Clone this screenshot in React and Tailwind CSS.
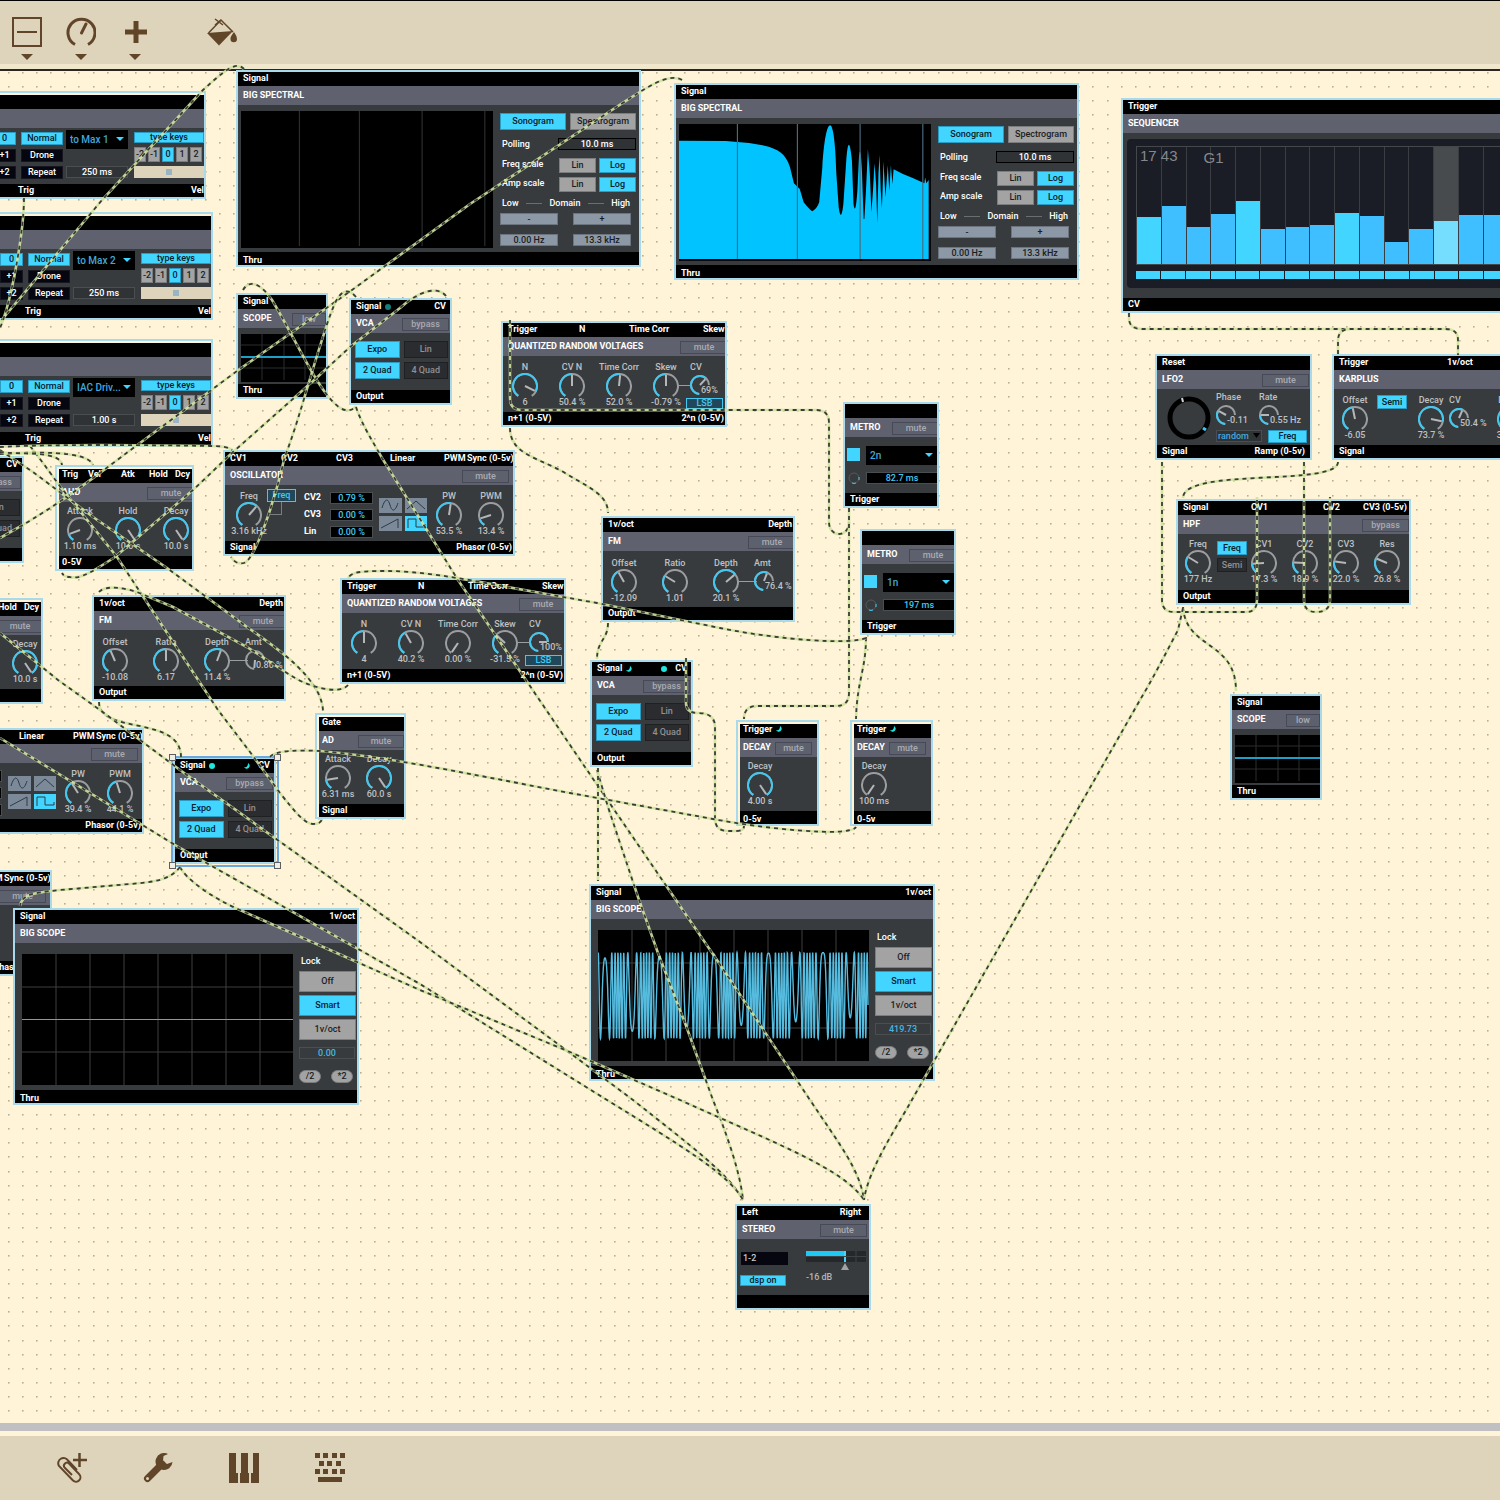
import clsx from 'clsx'

// Knob angles are in degrees, clockwise, 0 is straight up
const polar = (c, r, deg) => {
  const a = (deg * Math.PI) / 180
  return [c + r * Math.sin(a), c - r * Math.cos(a)]
}

const arc = (c, r, from, to) => {
  const [x1, y1] = polar(c, r, from)
  const [x2, y2] = polar(c, r, to)
  return `M${x1} ${y1}A${r} ${r} 0 ${to - from > 180 ? 1 : 0} 1 ${x2} ${y2}`
}

const Dial = ({ size, value, start, end }) => {
  const c = size / 2
  const r = c - 1
  const angle = start + (end - start) * value
  const [nx, ny] = polar(c, r - 1, angle)
  return (
    <svg width={size} height={size} fill="none" strokeWidth="2" className="block">
      <path d={arc(c, r, start, end)} stroke="#9b9d9f" />
      {value > 0 && <path d={arc(c, r, start, angle)} stroke="#42c8f0" />}
      <line x1={c} y1={c} x2={nx} y2={ny} stroke="#b4b6b8" />
    </svg>
  )
}

const Knob = ({ label, value, text, className }) => (
  <label className={clsx('relative flex w-[42px] shrink-0 flex-col items-center whitespace-nowrap text-[#bfc1c3]', className)}>
    <span className="h-3 leading-3">{label}</span>
    <Dial size={26} value={value} start={-146} end={146} />
    <span className="-mt-[3px] h-3 leading-3">{text}</span>
    <input type="range" defaultValue={value * 100} className="absolute inset-0 w-full opacity-0" />
  </label>
)

// Small knob whose value sits over its open lower right corner
const MiniKnob = ({ label, value, text, className }) => (
  <label className={clsx('relative flex w-[34px] shrink-0 flex-col whitespace-nowrap text-[#bfc1c3]', className)}>
    <span className="h-3 leading-3">{label}</span>
    <span className="mt-[2px]">
      <Dial size={20} value={value} start={-175} end={90} />
    </span>
    <span className="absolute left-[11px] top-[23px] leading-3">{text}</span>
    <input type="range" defaultValue={value * 100} className="absolute inset-0 w-full opacity-0" />
  </label>
)

const tones = {
  on: 'border-[#2a9cc4] bg-[#42d5ff] text-[#08202b]',
  grey: 'border-[#7c7d7e] bg-[#a3a3a3] text-[#1b1d1f]',
  slate: 'border-[#6c7480] bg-[#8d98a6] text-[#1b1d1f]',
  off: 'border-[#1f2022] bg-[#2b2c30] text-[#909193]',
  navy: 'border-[#15161f] bg-[#05060f] text-white',
  ghost: 'border-[#474a56] bg-[#5d606d] text-[#a9abb3]',
  outline: 'border-[#42c8f0] bg-[#20485a] text-[#42c8f0]',
}

const Btn = ({ tone = 'grey', className, children }) => (
  <button type="button" className={clsx('flex shrink-0 items-center justify-center whitespace-nowrap border leading-none', tones[tone], className)}>
    {children}
  </button>
)

const NumBox = ({ label, value, className }) => (
  <input
    type="text"
    readOnly
    aria-label={label}
    value={value}
    className={clsx('block shrink-0 border text-center font-medium leading-none outline-none', className)}
  />
)

const Dropdown = ({ label, value, className }) => (
  <div className={clsx('relative shrink-0 text-[#42a8dc]', className)}>
    <select aria-label={label} defaultValue={value} className="block h-full w-full appearance-none bg-black pl-1 text-[10px] leading-none">
      <option>{value}</option>
    </select>
    <svg width="8" height="5" className="pointer-events-none absolute right-1 top-[7px]">
      <path d="M0 0H8L4 4Z" fill="#42d5ff" />
    </svg>
  </div>
)

const Lamp = ({ kind }) => (
  <svg width="6" height="6" className="shrink-0">
    {kind === 'half' ? (
      <path d="M4 0A3 3 0 1 1 0 4Q4 5 4 0Z" fill="#20e6e0" />
    ) : (
      <circle cx="3" cy="3" r="3" fill={kind === 'dim' ? '#137f7c' : '#20e6e0'} />
    )}
  </svg>
)

const Module = ({ className, title, head, foot, footClass, action = 'mute', actionClass = '-mr-[3px] w-[48px]', inset, children }) => {
  const pad = inset === 'left' ? 'px-[3px]' : 'px-[5px]'
  return (
    <section
      className={clsx(
        'absolute flex flex-col overflow-hidden border-2 border-[#a9daec] bg-[#fff4d8] text-[9px] font-medium text-white',
        inset && 'pt-[2px]',
        inset === 'left' && 'pl-[2px]',
        className,
      )}
    >
      <header
        className={clsx('flex h-[14px] shrink-0 items-center gap-1 whitespace-nowrap bg-black font-bold leading-none', pad, inset === 'left' ? 'pb-1' : 'pb-px')}
      >
        {head}
      </header>
      <div className={clsx('flex h-[19px] shrink-0 justify-between bg-[#5f626e]', inset === 'left' ? 'pl-[3px]' : 'pl-[5px]')}>
        <h2 className="whitespace-nowrap pt-[3px] font-bold leading-3">{title}</h2>
        {action && (
          <Btn tone="ghost" className={clsx('mt-1 h-[13px]', actionClass)}>
            {action}
          </Btn>
        )}
      </div>
      <div className="flex flex-1 bg-[#373b3e]">{children}</div>
      <footer className={clsx('flex h-[13px] shrink-0 items-center justify-between whitespace-nowrap bg-black font-bold leading-none', pad, footClass)}>
        {foot}
      </footer>
    </section>
  )
}

const Keyboard = ({ className, port, rate }) => (
  <Module
    className={clsx('h-[108px] w-[213px] border-l-0', className)}
    inset="top"
    action={null}
    foot={
      <>
        <span className="pl-5">Trig</span>
        <span className="-mr-[5px]">Vel</span>
      </>
    }
  >
    <div className="flex flex-col gap-1 pt-1">
      {['0', '+1', '+2'].map((oct, i) => (
        <Btn key={oct} tone={i ? 'navy' : 'on'} className="h-[13px] w-[23px]">
          {oct}
        </Btn>
      ))}
    </div>
    <div className="ml-[5px] flex flex-col gap-1 pt-1">
      {['Normal', 'Drone', 'Repeat'].map((mode, i) => (
        <Btn key={mode} tone={i ? 'navy' : 'on'} className="h-[13px] w-[42px]">
          {mode}
        </Btn>
      ))}
    </div>
    <div className="ml-[3px] flex flex-col justify-between pb-[6px] pt-[2px]">
      <Dropdown label="MIDI port" value={port} className="h-[19px] w-[62px]" />
      <NumBox label="Repeat rate" value={rate} className="h-3 w-[62px] border-[#4b4e51] bg-[#303336]" />
    </div>
    <div className="ml-[6px] flex flex-col gap-1 pt-1">
      <Btn tone="on" className="h-[11px] w-[70px]">
        type keys
      </Btn>
      <div className="flex gap-[2px]">
        {['-2', '-1', '0', '1', '2'].map((n) => (
          <Btn key={n} tone={n === '0' ? 'on' : 'grey'} className="h-[15px] w-[12px]">
            {n}
          </Btn>
        ))}
      </div>
      <div className="h-3 w-[74px] bg-[#ded4bb] pl-8 pt-[3px]">
        <div className="size-[6px] bg-[#9ab4c4]" />
      </div>
    </div>
  </Module>
)

const spectrumPath =
  'M0 50L120 51L180 57L220 65C255 75 275 90 285 130L295 178L310 195L320 235Q336 258 342 262Q354 255 360 235L368 130C372 50 380 4 388 4C396 4 402 60 404 150L410 250Q416 300 422 240L430 100Q436 20 444 110L448 240Q453 280 458 200L462 100Q466 50 470 150L474 285L476 285L480 200L485 75L490 150L494 265L498 200L502 118L506 180L509 298L512 150L515 92L518 200L521 252L525 112L530 220L536 124L540 200L544 124L548 180L551 136L575 150L600 162L630 178L632 160L635 178L641 168V405H0Z'

const SpectralGraph = ({ active }) => (
  <svg width="252" height="137" viewBox="0 0 647 411" preserveAspectRatio="none" className="ml-[3px] mt-[6px] shrink-0 bg-black">
    {active && <path d={spectrumPath} fill="#00c3ff" />}
    <path d="M150 0V405M304 0V405M465 0V405M626 0V405" stroke={active ? '#4a6a7c' : '#2c2d2f'} strokeWidth="3" fill="none" />
  </svg>
)

const BigSpectral = ({ className, active }) => (
  <Module className={clsx('h-[197px] w-[405px]', className)} title="BIG SPECTRAL" action={null} head="Signal" foot="Thru" footClass="pt-1">
    <SpectralGraph active={active} />
    <div className="ml-[7px] w-[136px] pt-2">
      <div className="flex gap-1">
        <Btn tone="on" className="h-[17px] w-[66px]">
          Sonogram
        </Btn>
        <Btn className="h-[17px] w-[66px]">Spectrogram</Btn>
      </div>
      <div className="mt-2 flex h-3 items-center justify-between pl-[2px] leading-none">
        Polling
        <NumBox label="Polling" value="10.0 ms" className="h-3 w-[78px] border-black bg-[#303336]" />
      </div>
      {['Freq scale', 'Amp scale'].map((name, i) => (
        <div key={name} className={clsx('flex items-start gap-[3px] pl-[2px] leading-3', i ? 'mt-1' : 'mt-2')}>
          <span className="w-[54px]">{name}</span>
          <Btn className="h-[15px] w-[37px]">Lin</Btn>
          <Btn tone="on" className="h-[15px] w-[37px]">
            Log
          </Btn>
        </div>
      ))}
      <div className="mt-[5px] flex h-3 items-center justify-between pl-[2px] pr-[6px] leading-none">
        <span>Low</span>
        <span className="h-px w-4 bg-[#6b6e71]" />
        <span>Domain</span>
        <span className="h-px w-4 bg-[#6b6e71]" />
        <span>High</span>
      </div>
      <div className="mt-1 flex gap-[15px]">
        <Btn tone="slate" className="h-3 w-[58px]">
          -
        </Btn>
        <Btn tone="slate" className="h-3 w-[58px]">
          +
        </Btn>
      </div>
      <div className="mt-[9px] flex gap-[15px]">
        <Btn tone="slate" className="h-3 w-[58px]">
          0.00 Hz
        </Btn>
        <Btn tone="slate" className="h-3 w-[58px]">
          13.3 kHz
        </Btn>
      </div>
    </div>
  </Module>
)

const Scope = ({ className }) => (
  <Module className={clsx('h-[106px] w-[92px]', className)} title="SCOPE" action="low" actionClass="w-[34px]" head="Signal" foot="Thru">
    <svg width="85" height="48" className="ml-[3px] mt-[6px] shrink-0 bg-black" fill="none">
      <path d="M21 0V46M43 0V46M64 0V46M0 11H86M0 34H86" stroke="#2b2d2f" />
      <path d="M0 23H86" stroke="#1f9fc8" strokeWidth="2" />
    </svg>
  </Module>
)

// A frequency modulated sine that slows down at every fold
const wave = Array.from({ length: 1621 }, (_, i) => {
  const x = i / 6
  const phase = 19.9 * Math.cos((2 * Math.PI * (x - 7)) / 54.5) + x * 0.002
  return `${x.toFixed(1)},${(65.5 - 43 * Math.sin(phase)).toFixed(1)}`
}).join(' ')

const BigScope = ({ className, freq, active }) => (
  <Module
    className={clsx('h-[197px] w-[346px]', className)}
    title="BIG SCOPE"
    action={null}
    head={
      <>
        <span>Signal</span>
        <span className="-mr-[3px] ml-auto">1v/oct</span>
      </>
    }
    foot="Thru"
    footClass="pt-1"
  >
    <svg width="271" height="131" className="ml-[7px] mt-[11px] shrink-0 bg-black" fill="none">
      <path d="M34 0V131M68 0V131M102 0V131M136 0V131M170 0V131M204 0V131M238 0V131M0 33H271M0 98H271" stroke="#3e3f41" />
      {active ? <polyline points={wave} stroke="#55bce0" strokeWidth="1.4" /> : <path d="M0 65.500H271" stroke="#5aa9cc" />}
    </svg>
    <div className="ml-[6px] w-[57px] pt-3">
      <div className="h-3 pl-[2px] leading-3">Lock</div>
      <div className="mt-1 flex flex-col gap-[3px]">
        {['Off', 'Smart', '1v/oct'].map((mode) => (
          <Btn key={mode} tone={mode === 'Smart' ? 'on' : 'grey'} className="h-[21px] w-[57px]">
            {mode}
          </Btn>
        ))}
      </div>
      <NumBox label="Frequency" value={freq} className="mt-[7px] h-3 w-[56px] border-[#4b4e51] text-[#42b8e0]" />
      <div className="mt-[11px] flex gap-[10px]">
        <Btn className="h-[13px] w-[22px] rounded-full">/2</Btn>
        <Btn className="h-[13px] w-[22px] rounded-full">*2</Btn>
      </div>
    </div>
  </Module>
)

const Vca = ({ className, left, right }) => (
  <Module
    className={clsx('h-[107px] w-[103px]', className)}
    title="VCA"
    action="bypass"
    actionClass="mr-px w-[47px]"
    head={
      <>
        <span>Signal</span>
        {left && <Lamp kind={left} />}
        <span className="-mr-px ml-auto flex items-center gap-2">
          {right && <Lamp kind={right} />}
          CV
        </span>
      </>
    }
    foot="Output"
  >
    <div className="grid h-[46px] flex-1 grid-cols-2 gap-1 pl-1 pr-[2px] pt-2">
      <Btn tone="on">Expo</Btn>
      <Btn tone="off">Lin</Btn>
      <Btn tone="on">2 Quad</Btn>
      <Btn tone="off">4 Quad</Btn>
    </div>
  </Module>
)

const Quantized = ({ className, knobs, amount, amountText }) => (
  <Module
    className={clsx('h-[106px] w-[226px]', className)}
    title="QUANTIZED RANDOM VOLTAGES"
    head={
      <>
        <span className="w-[67px] shrink-0">Trigger</span>
        <span className="w-[46px] shrink-0">N</span>
        <span className="w-[70px] shrink-0">Time Corr</span>
        <span>Skew</span>
      </>
    }
    foot={
      <>
        <span>n+1 (0-5V)</span>
        <span className="-mr-1">2^n (0-5V)</span>
      </>
    }
  >
    <div className="flex gap-[5px] pl-[1px] pt-[5px]">
      {knobs.map(([label, value, text]) => (
        <Knob key={label} label={label} value={value} text={text} />
      ))}
    </div>
    <div className="-ml-2 h-[30px] w-3 border-b border-[#9b9d9f]" />
    <div className="-ml-px pt-[5px]">
      <MiniKnob label="CV" value={amount} text={amountText} />
      <Btn tone="outline" className="-ml-1 mt-[3px] h-[11px] w-[37px]">
        LSB
      </Btn>
    </div>
  </Module>
)

const waves = ['M3 10C6 0 9 0 11 7S16 14 19 5', 'M2 11L11 3L20 11', 'M2 12L19 3V12', 'M3 12V3H11V11H20V8']

const Oscillator = ({ className, freq, freqText, cv2, pw, pwText, pwm, pwmText }) => (
  <Module
    className={clsx('h-[106px] w-[292px]', className)}
    title="OSCILLATOR"
    actionClass="mr-1 w-[47px]"
    head={
      <>
        <span className="w-[47px] shrink-0">CV1</span>
        <span className="w-[51px] shrink-0">CV2</span>
        <span className="w-[50px] shrink-0">CV3</span>
        <span className="w-[50px] shrink-0">Linear</span>
        <span className="w-[19px] shrink-0">PWM</span>
        <span>Sync (0-5v)</span>
      </>
    }
    foot={
      <>
        <span>Signal</span>
        <span className="-mr-1">Phasor (0-5v)</span>
      </>
    }
  >
    <Knob className="ml-[3px] mt-[5px]" label="Freq" value={freq} text={freqText} />
    <div className="-ml-[3px] mt-1">
      <Btn tone="outline" className="h-[13px] w-[29px]">
        Freq
      </Btn>
      <div className="h-[13px] w-[15px] border-b border-r border-[#7b7d7f]" />
    </div>
    <div className="ml-2 flex w-[26px] flex-col gap-[5px] pt-[6px] font-bold leading-3">
      <span>CV2</span>
      <span>CV3</span>
      <span>Lin</span>
    </div>
    <div className="flex flex-col gap-[5px] pt-[7px]">
      {[cv2, '0.00 %', '0.00 %'].map((value, i) => (
        <NumBox key={i} label={['CV2', 'CV3', 'Lin'][i]} value={value} className="h-3 w-[43px] border-[#4b4e51] bg-black text-[#42c8f0]" />
      ))}
    </div>
    <div className="ml-[6px] mt-[13px] grid w-[48px] grid-cols-2 content-start gap-[3px]">
      {waves.map((d, i) => (
        <button key={d} type="button" aria-label="Waveform" className={clsx('h-[15px]', i === 3 ? 'bg-[#42d5ff]' : 'bg-[#7b8998]')}>
          <svg width="22" height="15" fill="none" stroke="#2e3a44" className="block">
            <path d={d} />
          </svg>
        </button>
      ))}
    </div>
    <Knob className="ml-[1px] mt-[5px]" label="PW" value={pw} text={pwText} />
    <Knob className="mt-[5px]" label="PWM" value={pwm} text={pwmText} />
  </Module>
)

const Ahd = ({ className }) => (
  <Module
    className={clsx('h-[106px] w-[139px]', className)}
    inset="left"
    title="AHD"
    head={
      <>
        <span className="w-[22px] shrink-0">Trig</span>
        <span className="w-[29px] shrink-0">Vel</span>
        <span className="w-[24px] shrink-0">Atk</span>
        <span className="w-[22px] shrink-0">Hold</span>
        <span>Dcy</span>
      </>
    }
    foot="0-5V"
  >
    <div className="flex gap-[6px] pt-[3px]">
      <Knob label="Attack" value={0.12} text="1.10 ms" />
      <Knob label="Hold" value={1} text="10.0 s" />
      <Knob label="Decay" value={1} text="10.0 s" />
    </div>
  </Module>
)

const Fm = ({ className, knobs, amount, amountText }) => (
  <Module
    className={clsx('h-[106px] w-[194px]', className)}
    title="FM"
    head={
      <>
        <span>1v/oct</span>
        <span className="-mr-1 ml-auto">Depth</span>
      </>
    }
    foot="Output"
  >
    <div className="flex gap-[9px] pt-[6px]">
      {knobs.map(([label, value, text]) => (
        <Knob key={label} label={label} value={value} text={text} />
      ))}
    </div>
    <div className="-ml-2 h-[31px] w-[18px] border-b border-[#9b9d9f]" />
    <MiniKnob className="-ml-[3px] mt-[6px]" label="Amt" value={amount} text={amountText} />
  </Module>
)

const Metro = ({ className, division, time }) => (
  <Module className={clsx('h-[106px] w-[96px]', className)} title="METRO" foot="Trigger">
    <div className="flex flex-col items-center gap-[11px] pl-[2px] pt-[11px]">
      <input type="checkbox" defaultChecked aria-label="Run" className="size-[13px] appearance-none bg-[#42d5ff]" />
      <svg width="12" height="12" fill="none">
        <circle cx="6" cy="6" r="5" stroke="#56595b" />
        <path d="M4 11Q6 12 8 11M11 5V8" stroke="#42c8f0" />
      </svg>
    </div>
    <div className="ml-[6px] flex flex-col gap-[7px] pt-[9px]">
      <Dropdown label="Division" value={division} className="h-[19px] w-[71px]" />
      <NumBox label="Interval" value={time} className="h-3 w-[72px] border-[#4b4e51] bg-black text-[#42c8f0]" />
    </div>
  </Module>
)

const Decay = ({ className, value, text }) => (
  <Module
    className={clsx('h-[106px] w-[83px]', className)}
    inset="left"
    title="DECAY"
    actionClass="mr-[5px] w-[37px]"
    head={
      <>
        <span>Trigger</span>
        <Lamp kind="half" />
      </>
    }
    foot="0-5v"
    footClass="pt-1"
  >
    <Knob className="-ml-px mt-[3px]" label="Decay" value={value} text={text} />
  </Module>
)

const steps = [47, 58, 37, 50, 63, 35, 37, 39, 51, 48, 22, 35, 43, 49, 49, 49]
const stepColor = (i) => (i === 12 ? 'bg-[#75deff]' : i % 4 === 0 ? 'bg-[#42d5ff]' : 'bg-[#3fbfff]')

const Sequencer = ({ className }) => (
  <Module className={clsx('h-[215px] w-[420px]', className)} title="SEQUENCER" action={null} head="Trigger" foot="CV">
    <div className="mx-1 mb-[10px] mt-[6px] flex-1 rounded bg-[#1a1d25] pl-[9px] pt-[7px]">
      <div className="relative flex h-[119px] w-[398px] border border-[#45484b]">
        {steps.map((h, i) => (
          <div key={i} className={clsx('flex flex-1 items-end border-r border-[#3a3d42]', i === 12 && 'bg-[#484b4e]')}>
            <div className={clsx('w-full', stepColor(i))} style={{ height: h }} />
          </div>
        ))}
        <div className="absolute left-[3px] top-px flex gap-[26px] font-['Liberation_Sans'] text-[15px] font-normal leading-4 text-[#85888b]">
          <span>17 43</span>
          <span className="pt-[2px]">G1</span>
        </div>
      </div>
      <div className="mt-[6px] flex h-2 w-[398px]">
        {steps.map((_, i) => (
          <div key={i} className="flex-1 border-r border-[#1a1d25] bg-[#42d5ff]" />
        ))}
      </div>
    </div>
  </Module>
)

const Lfo = ({ className }) => (
  <Module
    className={clsx('h-[106px] w-[157px]', className)}
    title="LFO2"
    actionClass="mr-px w-[47px]"
    head="Reset"
    foot={
      <>
        <span>Signal</span>
        <span>Ramp (0-5v)</span>
      </>
    }
  >
    <svg width="44" height="44" fill="none" className="ml-[10px] mt-[7px] shrink-0">
      <circle cx="22" cy="22" r="19" stroke="#000" strokeWidth="5" />
      <path d="M15 2L16 6" stroke="#d0d2d4" strokeWidth="2" />
      <path d="M36 32L39 34" stroke="#42c8f0" strokeWidth="3" />
    </svg>
    <div className="ml-[5px] pt-[2px]">
      <div className="flex gap-[9px]">
        <MiniKnob label="Phase" value={0.43} text="-0.11" />
        <MiniKnob label="Rate" value={0.32} text="0.55 Hz" />
      </div>
      <div className="mt-[5px] flex gap-[6px]">
        <div className="relative h-3 w-[46px] text-[#42a8dc]">
          <select aria-label="Shape" defaultValue="random" className="block h-full w-full appearance-none border border-[#4b4e51] bg-[#303336] pl-px leading-none">
            <option>random</option>
          </select>
          <svg width="7" height="5" className="pointer-events-none absolute right-[2px] top-[3px]">
            <path d="M0 0H7L3.500 5Z" fill="#000" />
          </svg>
        </div>
        <Btn tone="on" className="h-[13px] w-[39px]">
          Freq
        </Btn>
      </div>
    </div>
  </Module>
)

const Karplus = ({ className }) => (
  <Module
    className={clsx('h-[106px] w-[240px]', className)}
    title="KARPLUS"
    head={
      <>
        <span className="w-[104px]">Trigger</span>
        <span>1v/oct</span>
      </>
    }
    foot="Signal"
  >
    <Knob className="mt-[5px]" label="Offset" value={0.46} text="-6.05" />
    <Btn tone="on" className="ml-px mt-[6px] h-[14px] w-[30px]">
      Semi
    </Btn>
    <Knob className="ml-[3px] mt-[5px]" label="Decay" value={0.85} text="73.7 %" />
    <MiniKnob className="-ml-[3px] mt-[5px]" label="CV" value={0.75} text="50.4 %" />
    <Knob className="ml-[6px] mt-[5px]" label="Damp" value={0.35} text="30.0 %" />
  </Module>
)

const Hpf = ({ className }) => (
  <Module
    className={clsx('h-[106px] w-[235px]', className)}
    title="HPF"
    action="bypass"
    actionClass="w-[47px]"
    head={
      <>
        <span className="w-[64px] shrink-0">Signal</span>
        <span className="w-[68px] shrink-0">CV1</span>
        <span className="w-[36px] shrink-0">CV2</span>
        <span>CV3 (0-5v)</span>
      </>
    }
    foot="Output"
  >
    <Knob className="-ml-px mt-1" label="Freq" value={0.3} text="177 Hz" />
    <div className="-ml-[2px] flex flex-col gap-[3px] pt-[7px]">
      <Btn tone="on" className="h-[14px] w-[30px]">
        Freq
      </Btn>
      <Btn tone="off" className="h-[14px] w-[30px]">
        Semi
      </Btn>
    </div>
    <div className="-ml-1 flex -space-x-px pt-1">
      <Knob label="CV1" value={0.18} text="17.3 %" />
      <Knob label="CV2" value={0.2} text="18.9 %" />
      <Knob label="CV3" value={0.22} text="22.0 %" />
      <Knob label="Res" value={0.27} text="26.8 %" />
    </div>
  </Module>
)

const Stereo = ({ className }) => (
  <Module
    className={clsx('h-[106px] w-[136px]', className)}
    title="STEREO"
    actionClass="mr-[2px] w-[47px]"
    head={
      <>
        <span>Left</span>
        <span className="ml-auto pr-[3px]">Right</span>
      </>
    }
  >
    <div className="flex flex-col gap-[10px] pl-[3px] pt-[13px]">
      <select aria-label="Output pair" defaultValue="1-2" className="ml-px block h-[13px] w-[47px] appearance-none bg-[#05060f] pl-[2px] leading-none text-[#c8cacc]">
        <option>1-2</option>
      </select>
      <Btn tone="on" className="h-[11px] w-[46px]">
        dsp on
      </Btn>
    </div>
    <label className="relative ml-[18px] pt-3 text-[#b4b6b8]">
      <svg width="60" height="20" className="block">
        <path d="M0 0H60V11H0Z" fill="#25282a" />
        <path d="M0 0H39V5H0Z" fill="#20c8f4" />
        <path d="M39 0V11" stroke="#42d5ff" strokeWidth="2" />
        <path d="M0 5.500H60M50 0V11" stroke="#3f4346" />
        <path d="M35 19L39 12L43 19Z" fill="#a3a3a3" />
      </svg>
      <span className="leading-3">-16 dB</span>
      <input type="range" defaultValue="65" className="absolute inset-0 w-full opacity-0" />
    </label>
  </Module>
)

const Ad = ({ className }) => (
  <Module className={clsx('h-[106px] w-[91px]', className)} inset="left" title="AD" actionClass="w-[46px]" head="Gate" foot="Signal">
    <div className="flex -space-x-px pt-[3px]">
      <Knob className="-ml-[2px]" label="Attack" value={0.16} text="6.31 ms" />
      <Knob label="Decay" value={1} text="60.0 s" />
    </div>
  </Module>
)

// Patch cords, in page coordinates
const cords = [
  'M244 69C236 61 226 69 203 90L102 200L0 322',
  'M24 198C24 230 12 300 0 328',
  'M682 80C668 72 646 88 618 106L470 204L352 290L237 371L140 443C90 480 60 505 0 538',
  'M243 290C250 278 262 285 272 300C290 330 305 362 318 382C332 404 346 418 356 406',
  'M356 297C350 290 343 288 336 301C322 330 300 420 285 456C275 500 255 560 244 563Q236 565 231 557',
  'M446 296C438 286 420 290 400 308L350 347L312 382L233 452L193 490L115 557C95 570 80 580 70 577Q64 577 62 573',
  'M356 407C362 425 372 440 382 458L458 580L587 770L667 887L717 960L810 1100C840 1145 860 1170 864 1200',
  'M597 770L608 807L638 897L658 953L685 1023L713 1100C725 1130 740 1170 743 1200',
  'M598 768V881',
  'M510 320V398Q510 410 522 410H816Q829 410 829 423V522C829 538 849 538 849 522',
  'M849 508V693Q849 706 836 706H757Q744 706 744 719',
  'M866 637C866 670 857 680 856 719',
  'M866 638C850 645 780 640 720 628L597 603L507 587C460 578 420 571 385 571C360 571 352 572 348 578',
  'M510 428C510 455 540 458 565 473S608 495 608 513',
  'M608 623C608 640 597 640 597 659',
  'M686 658V704Q687 713 698 713Q715 713 715 727V820Q716 831 728 831H736Q744 831 744 826',
  'M270 757C275 750 300 750 320 751C380 756 450 770 570 793L713 819C760 828 850 838 856 827',
  'M99 702C99 735 181 715 181 757',
  'M0 633L58 680L100 710L180 770L420 942L570 1053L633 1100C690 1145 730 1175 743 1200',
  'M0 738L180 848L420 984L570 1077L607 1100C680 1145 730 1175 743 1200',
  'M180 867C185 878 210 897 240 910L420 990L570 1052L680 1100C780 1145 845 1170 864 1200',
  'M180 867C170 880 155 882 130 884L60 890C30 893 22 895 20 906',
  'M30 446C45 465 55 480 63 490L117 557L142 595L218 710L250 752L280 793C295 812 305 824 313 824Q321 824 322 819',
  'M0 450L33 472L93 517L167 568L247 627C280 650 322 680 323 711',
  'M99 592C105 585 125 587 142 594L173 607L247 647L290 675C310 688 340 695 348 685',
  'M0 447C50 444 150 445 210 446Q228 446 232 450',
  'M0 454C30 452 88 450 93 465',
  'M0 452C20 455 60 450 62 465',
  'M1129 313V318Q1129 329 1142 329H1445Q1458 329 1458 340V355',
  'M1338 354V341Q1338 329 1350 329',
  'M1338 462C1338 487 1183 467 1183 498',
  'M1162 462V600Q1162 612 1174 612H1246Q1257 612 1257 600V497',
  'M1304 462V600Q1304 612 1316 612Q1330 612 1330 600V497',
  'M1183 607C1186 650 1236 640 1236 691',
  'M1183 608L1178 630C1165 655 1152 680 1140 700L913 1098C895 1130 868 1170 864 1200',
]

const Cords = () => (
  <svg className="pointer-events-none absolute inset-0 h-full w-full" fill="none">
    <g transform="translate(0 -64)">
      {cords.map((d) => (
        <g key={d}>
          <path d={d} stroke="#cfe2a0" strokeWidth="2.6" strokeOpacity="0.9" />
          <path d={d} stroke="#3a3d36" strokeWidth="1.8" strokeDasharray="4 4" />
        </g>
      ))}
    </g>
  </svg>
)

const rows = Array.from({ length: 12 }, (_, i) => Math.round((i * 169) / 12))

const DotGrid = () => (
  <svg className="absolute inset-0 h-full w-full">
    <defs>
      <pattern id="dots" x="8" y="8" width="169" height="169" patternUnits="userSpaceOnUse">
        {rows.flatMap((y) => rows.map((x) => <rect key={`${x}-${y}`} x={x} y={y} width="1.6" height="1.6" fill="#b9ae92" />))}
      </pattern>
    </defs>
    <rect width="100%" height="100%" fill="url(#dots)" />
  </svg>
)

const Selection = ({ className }) => (
  <div className={clsx('pointer-events-none absolute border-2 border-[#6aa7dd]', className)}>
    {['-left-1 -top-1', '-right-1 -top-1', '-bottom-1 -left-1', '-bottom-1 -right-1'].map((pos) => (
      <span key={pos} className={clsx('absolute size-[7px] border border-[#5e5e5e] bg-[#f1eee6]', pos)} />
    ))}
  </div>
)

const ToolButton = ({ label, arrow, children }) => (
  <button type="button" aria-label={label} className="w-[30px] shrink-0">
    <svg width="30" height="30" viewBox="0 0 30 30" fill="none" stroke="#604529" className="block">
      {children}
    </svg>
    {arrow && (
      <svg width="12" height="7" className="mx-auto mt-[7px] block">
        <path d="M0 0H12L6 6Z" fill="#604529" />
      </svg>
    )}
  </button>
)

const App = () => (
  <div className="flex h-screen flex-col overflow-hidden bg-[#fff4d8] font-['Roboto',sans-serif]">
    <nav className="flex h-16 shrink-0 items-start gap-6 border-t border-black bg-[#ded4bb] pl-3 pt-4">
      <ToolButton label="Objects" arrow>
        <rect x="1" y="1" width="28" height="28" strokeWidth="2" />
        <path d="M5 15H25" strokeWidth="2" />
      </ToolButton>
      <ToolButton label="Controls" arrow>
        <path d="M9 27.500A13.500 13.500 0 1 1 22 27.500" strokeWidth="3" />
        <path d="M15.500 16L20 7" strokeWidth="3" strokeLinecap="round" />
      </ToolButton>
      <ToolButton label="Add" arrow>
        <path d="M16 4V26M5 15H27" strokeWidth="5" />
      </ToolButton>
      <div className="ml-[33px]">
        <ToolButton label="Format">
          <path d="M1.500 16L14 3L26 15" strokeWidth="1.500" />
          <path d="M0 16L26 14L12 28.500Z" fill="#604529" stroke="none" />
          <path d="M8 2L16 8M14 3L8 8" strokeWidth="1.500" />
          <path d="M27 15Q23 20 23.500 22A3.200 3.200 0 0 0 30 22Q30 19 27 15Z" fill="#604529" stroke="none" />
        </ToolButton>
      </div>
    </nav>

    <main className="relative min-h-0 flex-1 overflow-hidden">
      <DotGrid />
      <div className="absolute inset-x-0 top-0 h-[7px] border-b-2 border-[#2c2620] bg-[#f1e7cd]" />

      <Keyboard className="-left-[7px] top-[27px]" port="to Max 1" rate="250 ms" />
      <Keyboard className="left-0 top-[148px]" port="to Max 2" rate="250 ms" />
      <Keyboard className="left-0 top-[275px]" port="IAC Driv..." rate="1.00 s" />

      <BigSpectral className="left-[236px] top-[6px]" />
      <BigSpectral className="left-[674px] top-[19px]" active />
      <Sequencer className="left-[1121px] top-[34px]" />

      <Scope className="left-[236px] top-[229px]" />
      <Vca className="left-[349px] top-[234px]" left="dim" />
      <Quantized
        className="left-[501px] top-[257px]"
        knobs={[
          ['N', 0.9, '6'],
          ['CV N', 0.5, '50.4 %'],
          ['Time Corr', 0.52, '52.0 %'],
          ['Skew', 0.5, '-0.79 %'],
        ]}
        amount={0.82}
        amountText="69%"
      />
      <Metro className="left-[843px] top-[338px]" division="2n" time="82.7 ms" />
      <Metro className="left-[860px] top-[465px]" division="1n" time="197 ms" />
      <Lfo className="left-[1155px] top-[290px]" />
      <Karplus className="left-[1332px] top-[290px]" />
      <Hpf className="left-[1176px] top-[435px]" />

      <Vca className="-left-[79px] top-[392px]" />
      <Ahd className="left-[55px] top-[401px]" />
      <Oscillator className="left-[223px] top-[386px]" freq={0.64} freqText="3.16 kHz" cv2="0.79 %" pw={0.53} pwText="53.5 %" pwm={0.13} pwmText="13.4 %" />
      <Ahd className="-left-[96px] top-[534px]" />
      <Fm
        className="left-[92px] top-[531px]"
        knobs={[
          ['Offset', 0.42, '-10.08'],
          ['Ratio', 0.5, '6.17'],
          ['Depth', 0.57, '11.4 %'],
        ]}
        amount={0}
        amountText="0.80 %"
      />
      <Quantized
        className="left-[340px] top-[514px]"
        knobs={[
          ['N', 0.5, '4'],
          ['CV N', 0.4, '40.2 %'],
          ['Time Corr', 0, '0.00 %'],
          ['Skew', 0.34, '-31.5 %'],
        ]}
        amount={1}
        amountText="100%"
      />
      <Fm
        className="left-[601px] top-[452px]"
        knobs={[
          ['Offset', 0.4, '-12.09'],
          ['Ratio', 0.3, '1.01'],
          ['Depth', 0.67, '20.1 %'],
        ]}
        amount={0.74}
        amountText="76.4 %"
      />
      <Oscillator className="-left-[148px] top-[664px]" freq={0.5} freqText="1.00 kHz" cv2="0.00 %" pw={0.39} pwText="39.4 %" pwm={0.44} pwmText="44.1 %" />
      <Vca className="left-[590px] top-[596px]" left="half" right="full" />
      <Vca className="left-[173px] top-[693px]" left="full" right="half" />
      <Ad className="left-[315px] top-[649px]" />
      <Decay className="left-[736px] top-[656px]" value={1} text="4.00 s" />
      <Decay className="left-[850px] top-[656px]" value={0} text="100 ms" />
      <Scope className="left-[1230px] top-[630px]" />
      <Oscillator className="-left-[240px] top-[806px]" freq={0.5} freqText="1.00 kHz" cv2="0.00 %" pw={0.5} pwText="50.0 %" pwm={0.5} pwmText="50.0 %" />
      <BigScope className="left-[13px] top-[844px]" freq="0.00" />
      <BigScope className="left-[589px] top-[820px]" freq="419.73" active />
      <Stereo className="left-[735px] top-[1140px]" />

      <Selection className="left-[171px] top-[692px] h-[111px] w-[108px]" />
      <Cords />
    </main>

    <div className="mb-[5px] h-2 shrink-0 bg-[#c0c0c2]" />

    <nav className="flex h-16 shrink-0 items-center gap-14 bg-[#ded4bb] pl-[57px]">
      <ToolButton label="Attachments">
        <path d="M20 17L11 7.500A5 5 0 0 0 2 13L16 27.500A4 4 0 0 0 22 21L12 10.500A2.700 2.700 0 0 0 8 15L15 22" strokeWidth="2" />
        <path d="M22.500 0V14M16 7H30" strokeWidth="2.500" />
      </ToolButton>
      <ToolButton label="Settings">
        <path d="M4.500 25.500L19 11" strokeWidth="7" strokeLinecap="round" />
        <path d="M25 1A8.500 8.500 0 1 0 29.500 9L24 11L20 8L20.500 3Z" fill="#604529" stroke="none" />
        <circle cx="4.500" cy="25.500" r="1.500" fill="#ded4bb" stroke="none" />
      </ToolButton>
      <ToolButton label="Piano">
        <path d="M0 0H7V20H9V30H0ZM12 0H19V20H20V30H11V20H12ZM24 0H30V30H22V20H24Z" fill="#604529" stroke="none" />
      </ToolButton>
      <ToolButton label="Typing keyboard">
        <path
          d="M0 0H5V5H0ZM8 0H13V5H8ZM17 0H22V5H17ZM25 0H30V5H25ZM4 8H9V13H4ZM12 8H17V13H12ZM21 8H26V13H21ZM0 16H5V21H0ZM8 16H13V21H8ZM17 16H22V21H17ZM25 16H30V21H25ZM3 24H27V29H3Z"
          fill="#604529"
          stroke="none"
        />
      </ToolButton>
    </nav>
  </div>
)

export default App
